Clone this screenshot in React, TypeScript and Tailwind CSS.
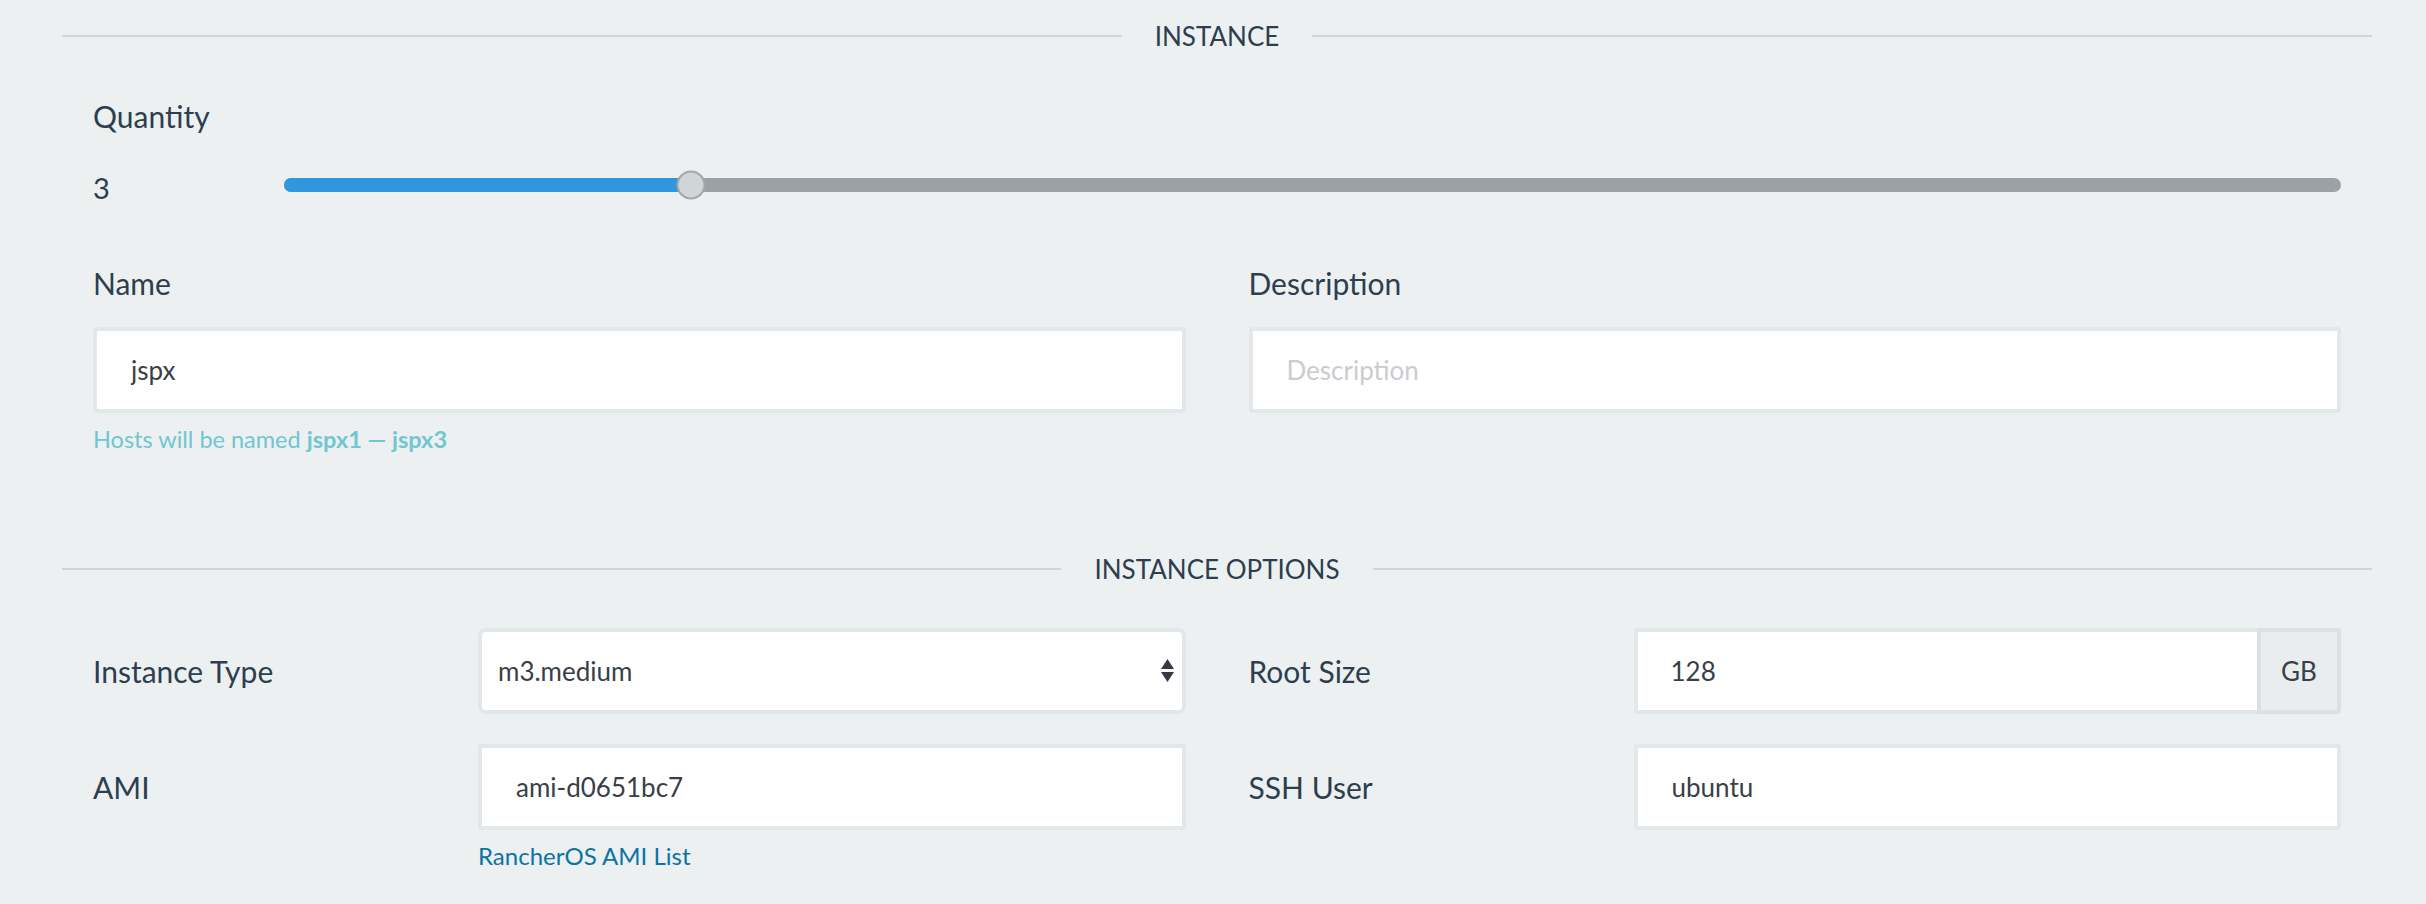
import React from 'react'

function SectionHeader({ title, className = '' }: { title: string; className?: string }) {
  return (
    <div className={`flex h-[40px] items-center ${className}`}>
      <div className="h-[2px] flex-1 bg-[#d0d4d6]" />
      <span className="px-[33px] text-[26px] leading-[40px] uppercase text-[#2c3e50]">{title}</span>
      <div className="h-[2px] flex-1 bg-[#d0d4d6]" />
    </div>
  )
}

function TextInput({ value, placeholder }: { value?: string; placeholder?: string }) {
  return (
    <input
      defaultValue={value}
      placeholder={placeholder}
      className="h-[86px] w-full rounded-[3px] border-[4px] border-[#e4e7e9] bg-white px-[34px] text-[26px] text-[#3a3f47] outline-none placeholder:text-[#c9ccd0]"
    />
  )
}

function FormRow({ label, children }: { label: string; children: React.ReactNode }) {
  return (
    <div className="flex flex-1 items-start">
      <div className="flex h-[86px] w-[385px] shrink-0 items-center text-[30px] leading-[40px] text-[#2c3e50]">
        {label}
      </div>
      <div className="flex-1">{children}</div>
    </div>
  )
}

export default function App() {
  const qty = 3
  const pct = ((qty - 1) / 10) * 99

  return (
    <div className="min-h-[904px] bg-[#ecf0f1] pl-[62px] pr-[54px] pt-[16px] font-['Lato',sans-serif]">
      <SectionHeader title="Instance" />

      <div className="px-[31px]">
        <div className="mt-[40px] text-[30px] leading-[40px] text-[#2c3e50]">Quantity</div>
        <div className="mt-[29px] flex h-[40px] items-center">
          <div className="w-[191px] shrink-0 pt-[6px] text-[29px] leading-[40px] text-[#2c3e50]">{qty}</div>
          <div className="relative h-[14px] flex-1 rounded-full bg-[#9aa2a8]">
            <div className="h-full rounded-l-full bg-[#2e97de]" style={{ width: `${pct}%` }} />
            <div
              className="absolute top-1/2 h-[29px] w-[29px] -translate-x-1/2 -translate-y-1/2 rounded-full border-[2px] border-[#a1a7ab] bg-[#d0d5d8]"
              style={{ left: `${pct}%` }}
            />
          </div>
        </div>

        <div className="mt-[58px] flex gap-[63px]">
          <div className="flex-1">
            <div className="text-[30px] leading-[40px] text-[#2c3e50]">Name</div>
            <div className="mt-[24px]">
              <TextInput value="jspx" />
            </div>
            <div className="mt-[10px] text-[23.5px] leading-[32px] text-[#70c6d1]">
              Hosts will be named <b className="font-bold">jspx1 — jspx3</b>
            </div>
          </div>
          <div className="flex-1">
            <div className="text-[30px] leading-[40px] text-[#2c3e50]">Description</div>
            <div className="mt-[24px]">
              <TextInput placeholder="Description" />
            </div>
          </div>
        </div>
      </div>

      <SectionHeader title="Instance Options" className="mt-[94px]" />

      <div className="px-[31px]">
        <div className="mt-[39px] flex gap-[63px]">
          <FormRow label="Instance Type">
            <div className="relative">
              <select
                defaultValue="m3.medium"
                className="h-[86px] w-full appearance-none rounded-[8px] border-[4px] border-[#e4e7e9] bg-white px-[16px] text-[26px] text-[#3a3f47] outline-none"
              >
                <option>m3.medium</option>
              </select>
              <svg
                className="pointer-events-none absolute right-[12px] top-1/2 -translate-y-1/2"
                width="13"
                height="24"
                viewBox="0 0 13 24"
              >
                <path d="M6.5 0 L13 10 L0 10 Z" fill="#333a44" />
                <path d="M0 13 L13 13 L6.5 23 Z" fill="#333a44" />
              </svg>
            </div>
          </FormRow>
          <FormRow label="Root Size">
            <div className="flex">
              <input
                defaultValue="128"
                className="h-[86px] min-w-0 flex-1 rounded-l-[3px] border-[4px] border-r-0 border-[#e4e7e9] bg-white px-[33px] text-[26px] text-[#3a3f47] outline-none"
              />
              <div className="flex h-[86px] w-[84px] items-center justify-center rounded-r-[3px] border-[4px] border-[#dce0e2] bg-[#e9edee] text-[26px] text-[#3a3f47]">
                GB
              </div>
            </div>
          </FormRow>
        </div>

        <div className="mt-[30px] flex gap-[63px]">
          <FormRow label="AMI">
            <TextInput value="ami-d0651bc7" />
            <a href="#" className="mt-[10px] block text-[24px] leading-[32px] text-[#0a74a6]">
              RancherOS AMI List
            </a>
          </FormRow>
          <FormRow label="SSH User">
            <TextInput value="ubuntu" />
          </FormRow>
        </div>
      </div>
    </div>
  )
}
